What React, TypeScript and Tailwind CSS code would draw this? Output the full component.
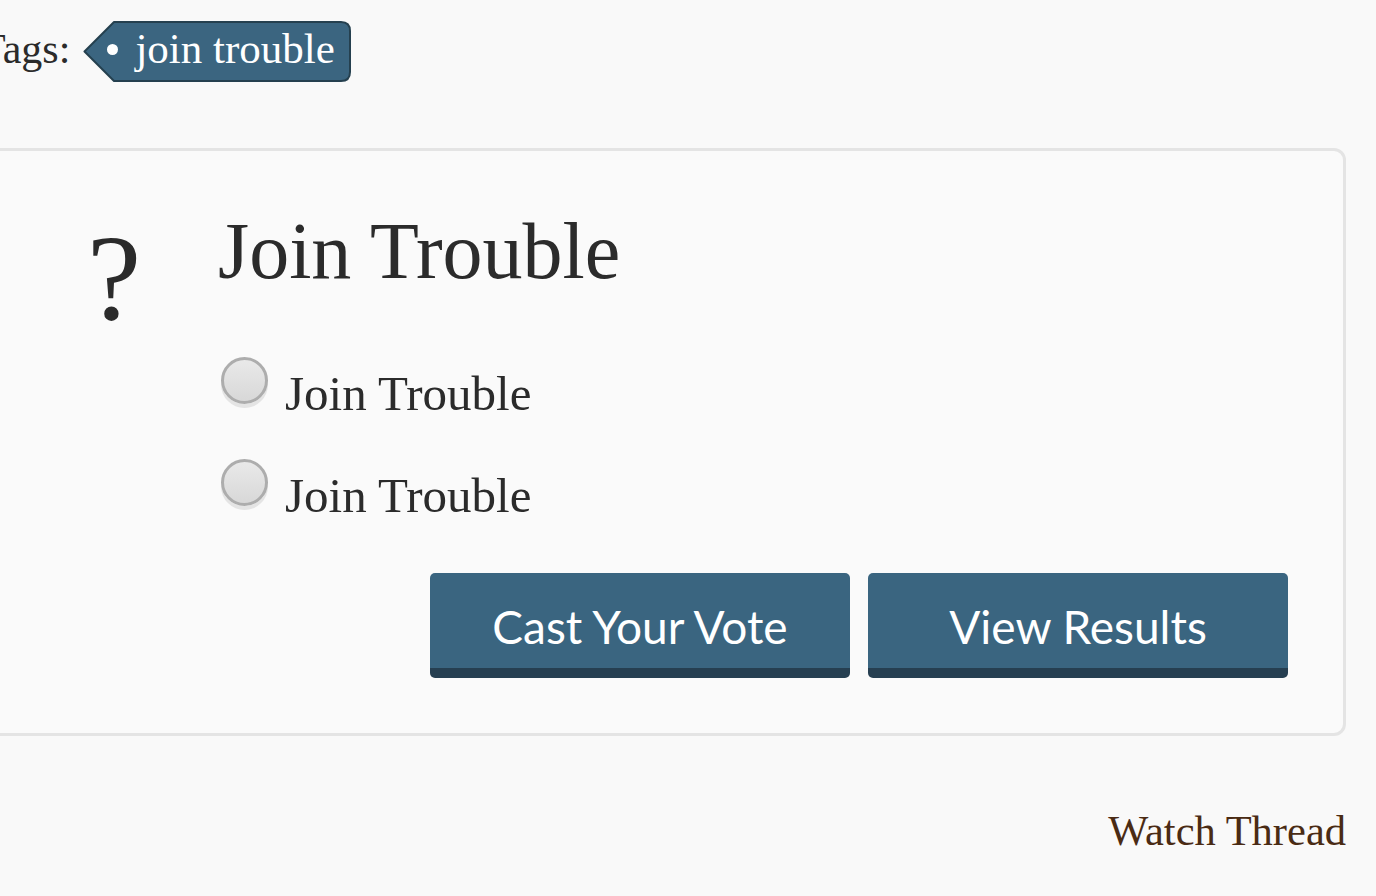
import React from "react";

const serif = { fontFamily: '"Liberation Serif", "Times New Roman", serif' };
const sans = { fontFamily: 'Lato, "Open Sans", sans-serif' };

function Radio({ label }: { label: string }) {
  return (
    <label className="flex items-start ml-[3px]">
      <span className="block w-[47px] h-[47px] rounded-full border-[3px] border-[#adadad] bg-gradient-to-b from-[#e9e9e9] to-[#d8d8d8] shadow-[0_4px_0_#e4e4e4]" />
      <span className="mt-[12px] ml-[17px] text-[49px] leading-none text-[#2b2b2b]" style={serif}>
        {label}
      </span>
    </label>
  );
}

function Button({ children }: { children: React.ReactNode }) {
  return (
    <button
      className="w-[420px] h-[105px] rounded-[5px] bg-[#3a6580] border-b-[10px] border-[#263f51] text-white text-[46px] leading-none flex items-center justify-center pt-[12px]"
      style={sans}
    >
      {children}
    </button>
  );
}

export default function App() {
  return (
    <div className="w-[1376px] h-[896px] overflow-hidden bg-[#f9f9f9]">
      <div className="ml-[-20px] w-[1366px]">
        {/* Tags row */}
        <div className="flex items-start pt-[21px]">
          <span className="mt-[7px] text-[42px] leading-none text-[#2b2b2b] whitespace-nowrap" style={serif}>
            Tags:
          </span>
          <div className="relative ml-[13px] w-[268px] h-[61px]">
            <svg className="absolute inset-0" width="268" height="61" viewBox="0 0 268 61">
              <path
                d="M31 1 H258 Q267 1 267 10 V51 Q267 60 258 60 H31 L1.5 30.5 Z"
                fill="#3b6580"
                stroke="#25404f"
                strokeWidth="2"
                strokeLinejoin="round"
              />
            </svg>
            <span className="absolute left-[24px] top-[23px] w-[11px] h-[11px] rounded-full bg-white" />
            <span
              className="absolute left-[52px] top-[6px] text-[43px] leading-none text-white whitespace-nowrap"
              style={serif}
            >
              join trouble
            </span>
          </div>
        </div>

        {/* Poll card */}
        <div className="mt-[66px] h-[588px] rounded-[12px] border-[3px] border-[#e4e4e4] bg-[#fafafa] flex">
          <div className="w-[235px] pl-[104px] pt-[66px]">
            <span className="block text-[122px] leading-none text-[#2b2b2b]" style={serif}>
              ?
            </span>
          </div>
          <div className="flex-1 pt-[60px] pr-[55px] flex flex-col">
            <h2 className="text-[80px] leading-none font-normal text-[#2b2b2b] whitespace-nowrap" style={serif}>
              Join Trouble
            </h2>
            <div className="mt-[66px] flex flex-col">
              <Radio label="Join Trouble" />
              <div className="h-[41px]" />
              <Radio label="Join Trouble" />
            </div>
            <div className="mt-[53px] flex justify-end gap-[18px]">
              <Button>Cast Your Vote</Button>
              <Button>View Results</Button>
            </div>
          </div>
        </div>

        {/* Watch thread */}
        <div className="mt-[74px] text-right">
          <a className="text-[42.5px] leading-none text-[#4a2b14] whitespace-nowrap" style={serif}>
            Watch Thread
          </a>
        </div>
      </div>
    </div>
  );
}
